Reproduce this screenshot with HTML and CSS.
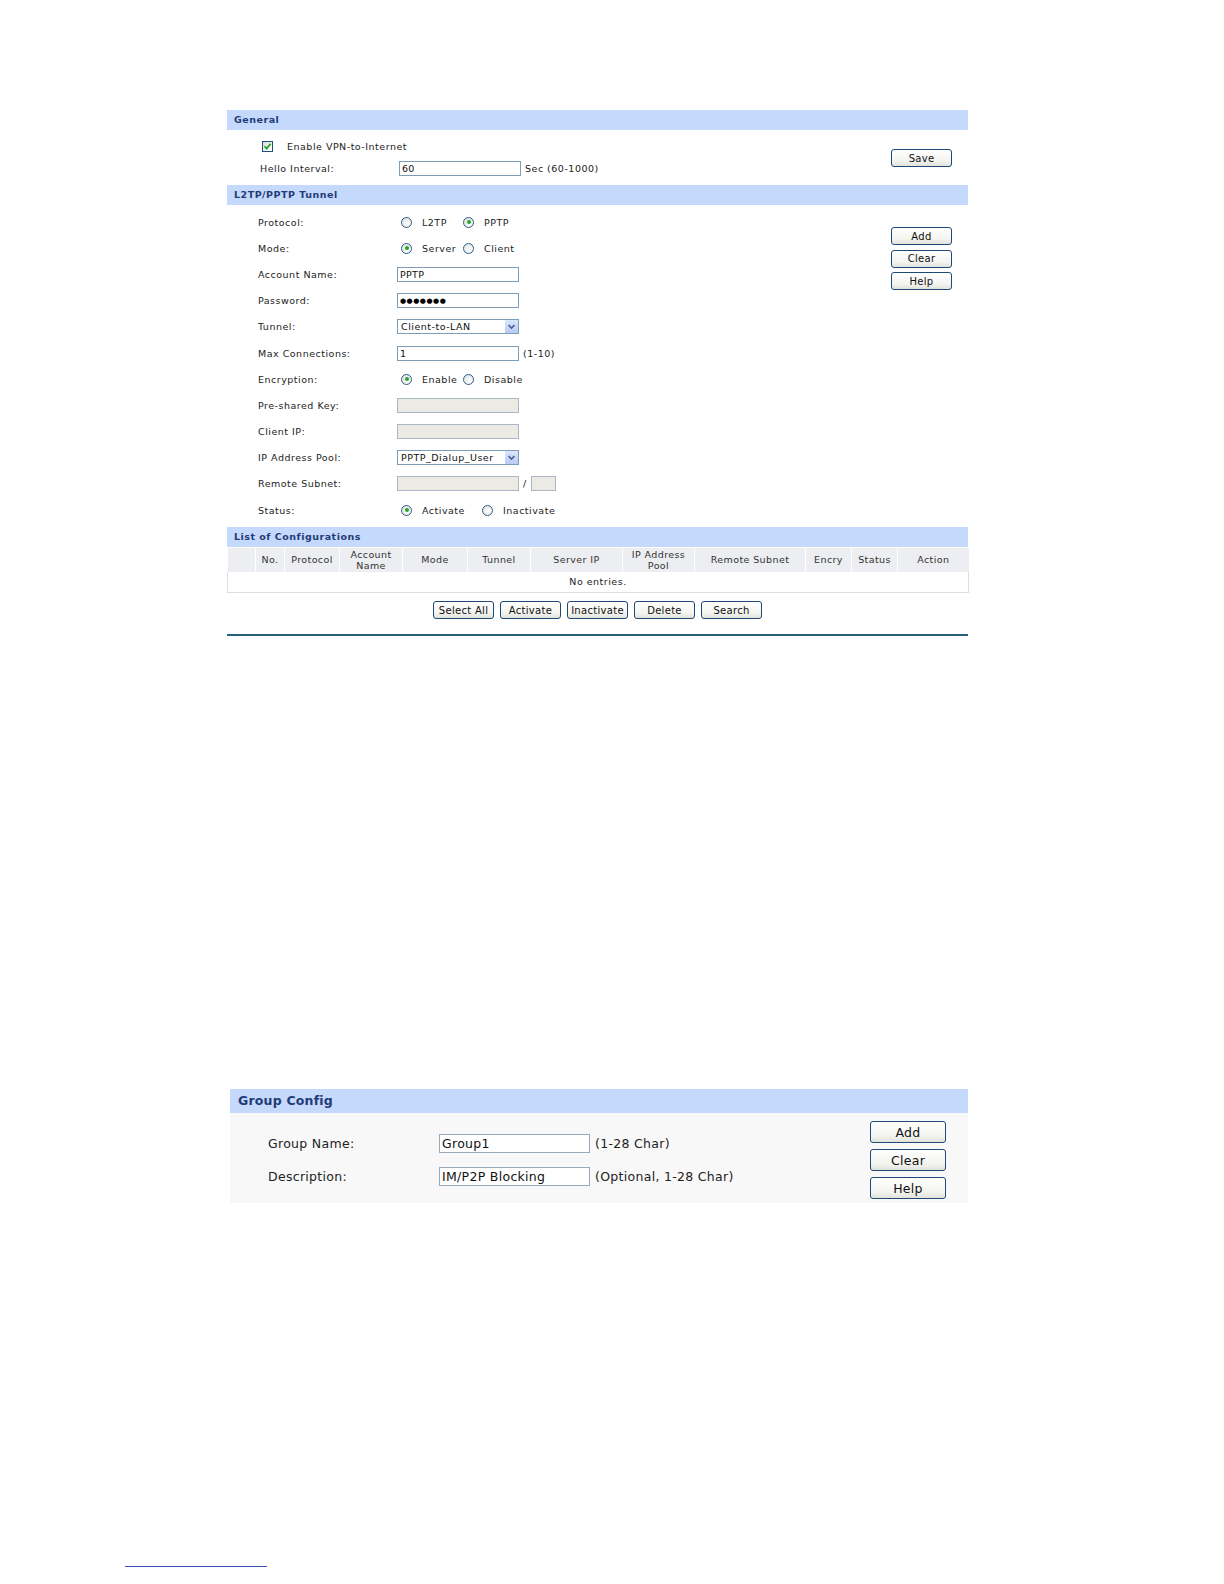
FILE: index.html
```html
<!DOCTYPE html>
<html lang="en">

<head>
    <meta charset="UTF-8" />
    <title>VPN / Group Config</title>
    <link rel="stylesheet" href="styles.css">
</head>

<body>
    <div class="doc">
        <!-- Первый скриншот: VPN -->
        <section class="panel vpn">
            <div class="bar">General</div>
            <div class="body general">
                <div class="fields">
                    <div class="row">
                        <span class="check">
                            <svg viewBox="0 0 11 11" width="11" height="11">
                                <path d="M2.5 5.2 L4.6 7.6 L8.6 2.8" fill="none" stroke="#21a121" stroke-width="1.7" />
                            </svg>
                        </span>
                        <span class="check-text">Enable VPN-to-Internet</span>
                    </div>
                    <div class="row">
                        <span class="label hello">Hello Interval:</span>
                        <input class="text" type="text" value="60">
                        <span class="hint">Sec (60-1000)</span>
                    </div>
                </div>
                <div class="actions save-col">
                    <button class="btn">Save</button>
                </div>
            </div>

            <div class="bar">L2TP/PPTP Tunnel</div>
            <div class="body tunnel">
                <div class="fields">
                    <div class="row">
                        <span class="label">Protocol:</span>
                        <span class="opt"><span class="radio"></span>L2TP</span>
                        <span class="opt"><span class="radio on"></span>PPTP</span>
                    </div>
                    <div class="row">
                        <span class="label">Mode:</span>
                        <span class="opt"><span class="radio on"></span>Server</span>
                        <span class="opt"><span class="radio"></span>Client</span>
                    </div>
                    <div class="row">
                        <span class="label">Account Name:</span>
                        <input class="text" type="text" value="PPTP">
                    </div>
                    <div class="row">
                        <span class="label">Password:</span>
                        <input class="text pass" type="text" value="●●●●●●●">
                    </div>
                    <div class="row">
                        <span class="label">Tunnel:</span>
                        <div class="select">
                            <span>Client-to-LAN</span>
                            <span class="arrow">
                                <svg viewBox="0 0 13 13" width="13" height="13">
                                    <path d="M3.5 5 L6.5 8 L9.5 5" fill="none" stroke="#4b5f86" stroke-width="1.6" />
                                </svg>
                            </span>
                        </div>
                    </div>
                    <div class="row">
                        <span class="label">Max Connections:</span>
                        <input class="text" type="text" value="1">
                        <span class="hint">(1-10)</span>
                    </div>
                    <div class="row">
                        <span class="label">Encryption:</span>
                        <span class="opt"><span class="radio on"></span>Enable</span>
                        <span class="opt"><span class="radio"></span>Disable</span>
                    </div>
                    <div class="row">
                        <span class="label">Pre-shared Key:</span>
                        <input class="text" type="text" disabled>
                    </div>
                    <div class="row">
                        <span class="label">Client IP:</span>
                        <input class="text" type="text" disabled>
                    </div>
                    <div class="row">
                        <span class="label">IP Address Pool:</span>
                        <div class="select">
                            <span>PPTP_Dialup_User</span>
                            <span class="arrow">
                                <svg viewBox="0 0 13 13" width="13" height="13">
                                    <path d="M3.5 5 L6.5 8 L9.5 5" fill="none" stroke="#4b5f86" stroke-width="1.6" />
                                </svg>
                            </span>
                        </div>
                    </div>
                    <div class="row">
                        <span class="label">Remote Subnet:</span>
                        <input class="text" type="text" disabled>
                        <span class="hint">/</span>
                        <input class="text mask" type="text" disabled>
                    </div>
                    <div class="row">
                        <span class="label">Status:</span>
                        <span class="opt wide"><span class="radio on"></span>Activate</span>
                        <span class="opt"><span class="radio"></span>Inactivate</span>
                    </div>
                </div>
                <div class="actions side-btns">
                    <button class="btn">Add</button>
                    <button class="btn">Clear</button>
                    <button class="btn">Help</button>
                </div>
            </div>

            <div class="bar">List of Configurations</div>
            <table class="list">
                <colgroup>
                    <col class="c-sel">
                    <col class="c-no">
                    <col class="c-proto">
                    <col class="c-acc">
                    <col class="c-mode">
                    <col class="c-tun">
                    <col class="c-srv">
                    <col class="c-pool">
                    <col class="c-sub">
                    <col class="c-enc">
                    <col class="c-st">
                    <col class="c-act">
                </colgroup>
                <thead>
                    <tr>
                        <th></th>
                        <th>No.</th>
                        <th>Protocol</th>
                        <th>Account<br>Name</th>
                        <th>Mode</th>
                        <th>Tunnel</th>
                        <th>Server IP</th>
                        <th>IP Address<br>Pool</th>
                        <th>Remote Subnet</th>
                        <th>Encry</th>
                        <th>Status</th>
                        <th>Action</th>
                    </tr>
                </thead>
                <tbody>
                    <tr>
                        <td colspan="12" class="empty">No entries.</td>
                    </tr>
                </tbody>
            </table>
            <div class="list-btns">
                <button class="btn">Select All</button>
                <button class="btn">Activate</button>
                <button class="btn">Inactivate</button>
                <button class="btn">Delete</button>
                <button class="btn">Search</button>
            </div>
            <div class="rule"></div>
        </section>

        <!-- Второй скриншот: Group Config -->
        <section class="panel group">
            <div class="bar">Group Config</div>
            <div class="body">
                <div class="fields">
                    <div class="row">
                        <span class="label">Group Name:</span>
                        <input class="text" type="text" value="Group1">
                        <span class="hint">(1-28 Char)</span>
                    </div>
                    <div class="row">
                        <span class="label">Description:</span>
                        <input class="text" type="text" value="IM/P2P Blocking">
                        <span class="hint">(Optional, 1-28 Char)</span>
                    </div>
                </div>
                <div class="actions">
                    <button class="btn">Add</button>
                    <button class="btn">Clear</button>
                    <button class="btn">Help</button>
                </div>
            </div>
        </section>

        <div class="footnote-line"></div>
    </div>
</body>

</html>
```

FILE: styles.css
```css
/* Базовый сброс */
* {
    margin: 0;
    padding: 0;
    box-sizing: border-box;
}

html,
body {
    background: #fff;
    color: #222;
    font-family: "DejaVu Sans", Verdana, sans-serif;
    overflow: hidden;
}

.doc {
    padding-top: 110px;
}

/* Общие элементы панели */
.panel {
    font-size: 9.5px;
    letter-spacing: 0.5px;
}

.bar {
    background: #c4d9fb;
    color: #1f3c78;
    font-weight: bold;
}

.body {
    display: flex;
    justify-content: space-between;
}

.row {
    display: flex;
    align-items: center;
}

.label {
    flex-shrink: 0;
}

.text {
    -webkit-appearance: none;
    appearance: none;
    border: 1px solid #7f9db9;
    background: #fff;
    font-family: inherit;
    color: #111;
    outline: none;
}

.text:disabled {
    background: #ebebe4;
    border-color: #a9b7c6;
}

.btn {
    font-family: inherit;
    color: #111;
    background: linear-gradient(#ffffff, #f3f3ef 70%, #e2e2dc);
    border: 1px solid #1d4a78;
    border-radius: 3px;
    cursor: pointer;
}

.actions {
    display: flex;
    flex-direction: column;
}

/* Первая панель */
.vpn {
    width: 741px;
    margin-left: 227px;
}

.vpn .bar {
    height: 20px;
    line-height: 20px;
    padding-left: 7px;
    font-size: 9.5px;
    letter-spacing: 0.5px;
}

.vpn .fields {
    padding-left: 31px;
}

.vpn .row {
    height: 26.2px;
}

.vpn .label {
    width: 139px;
}

.vpn .text {
    width: 122px;
    height: 15px;
    font-size: 9.5px;
    letter-spacing: 0.3px;
    padding: 0 2px;
}

.vpn .hint {
    margin-left: 4px;
}

.vpn .btn {
    width: 61px;
    height: 18px;
    font-size: 10px;
    letter-spacing: 0.3px;
}

.general {
    height: 55px;
}

.general .fields {
    padding-top: 5px;
    padding-left: 33px;
}

.general .row {
    height: 22px;
}

.general .label {
    width: 139px;
}

.check {
    width: 11px;
    height: 11px;
    margin-left: 2px;
    margin-right: 14px;
    border: 1px solid #1c5180;
    background: linear-gradient(135deg, #dcdcd6, #ffffff);
    display: flex;
}

.check svg {
    margin: -1px;
}

.save-col {
    padding-top: 19px;
    padding-right: 16px;
}

.tunnel {
    height: 322px;
}

.tunnel .fields {
    padding-top: 4px;
}

.vpn .text.pass {
    letter-spacing: 0.5px;
    font-size: 7px;
    color: #000;
}

.vpn .text.mask {
    width: 25px;
    margin-left: 4px;
}

.opt {
    display: flex;
    align-items: center;
    min-width: 62px;
}

.opt.wide {
    min-width: 81px;
}

.label + .opt {
    margin-left: 4px;
}

.radio {
    width: 11px;
    height: 11px;
    border-radius: 50%;
    border: 1px solid #2b5e8c;
    background: radial-gradient(circle at 65% 65%, #ffffff, #dcdcd8);
    margin-right: 10px;
    display: flex;
    align-items: center;
    justify-content: center;
}

.radio.on::after {
    content: "";
    width: 4px;
    height: 4px;
    border-radius: 50%;
    background: #24a626;
}

.select {
    width: 122px;
    height: 15px;
    border: 1px solid #7f9db9;
    display: flex;
    align-items: center;
    justify-content: space-between;
    padding-left: 3px;
    background: #fff;
    color: #111;
}

.select .arrow {
    width: 13px;
    height: 13px;
    background: linear-gradient(#dbe6fd, #b7cbf6);
    display: flex;
}

.side-btns {
    padding-top: 22px;
    padding-right: 16px;
    gap: 4.5px;
}

/* Таблица конфигураций */
.list {
    width: 741px;
    border-collapse: collapse;
    table-layout: fixed;
    border-top: 1px solid #fff;
}

.c-sel { width: 28px; }
.c-no { width: 29px; }
.c-proto { width: 55px; }
.c-acc { width: 63px; }
.c-mode { width: 65px; }
.c-tun { width: 63px; }
.c-srv { width: 92px; }
.c-pool { width: 72px; }
.c-sub { width: 111px; }
.c-enc { width: 46px; }
.c-st { width: 46px; }
.c-act { width: 71px; }

.list th {
    height: 24px;
    background: #eceef1;
    font-weight: normal;
    color: #333;
    line-height: 11px;
    border-left: 1px solid #fff;
    letter-spacing: 0.4px;
}

.list th:first-child {
    border-left: none;
}

.list td.empty {
    height: 21px;
    text-align: center;
    border: 1px solid #d9dee4;
    border-top: none;
    background: #fff;
}

.list-btns {
    display: flex;
    justify-content: center;
    gap: 6px;
    padding-top: 8px;
    height: 41px;
}

.rule {
    height: 2px;
    background: #285f7d;
}

/* Вторая панель */
.group {
    width: 738px;
    margin-left: 230px;
    margin-top: 453px;
    font-size: 12.5px;
    letter-spacing: 0.3px;
}

.group .bar {
    height: 24px;
    line-height: 24px;
    padding-left: 8px;
    font-size: 12.5px;
    letter-spacing: 0.2px;
}

.group .body {
    height: 90px;
    background: #f8f8f8;
}

.group .fields {
    padding-top: 13.5px;
    padding-left: 38px;
}

.group .row {
    height: 33px;
}

.group .label {
    width: 171px;
}

.group .text {
    width: 151px;
    height: 19px;
    font-size: 12.5px;
    letter-spacing: 0.3px;
    padding: 0 2px;
    border-color: #9aaabd;
}

.group .hint {
    margin-left: 5px;
}

.group .actions {
    padding-top: 8px;
    padding-right: 22px;
    gap: 6px;
}

.group .btn {
    width: 76px;
    height: 22px;
    font-size: 12.5px;
    letter-spacing: 0.3px;
}

.footnote-line {
    width: 142px;
    height: 1px;
    margin-left: 125px;
    margin-top: 363px;
    background: #3550b0;
}
```
